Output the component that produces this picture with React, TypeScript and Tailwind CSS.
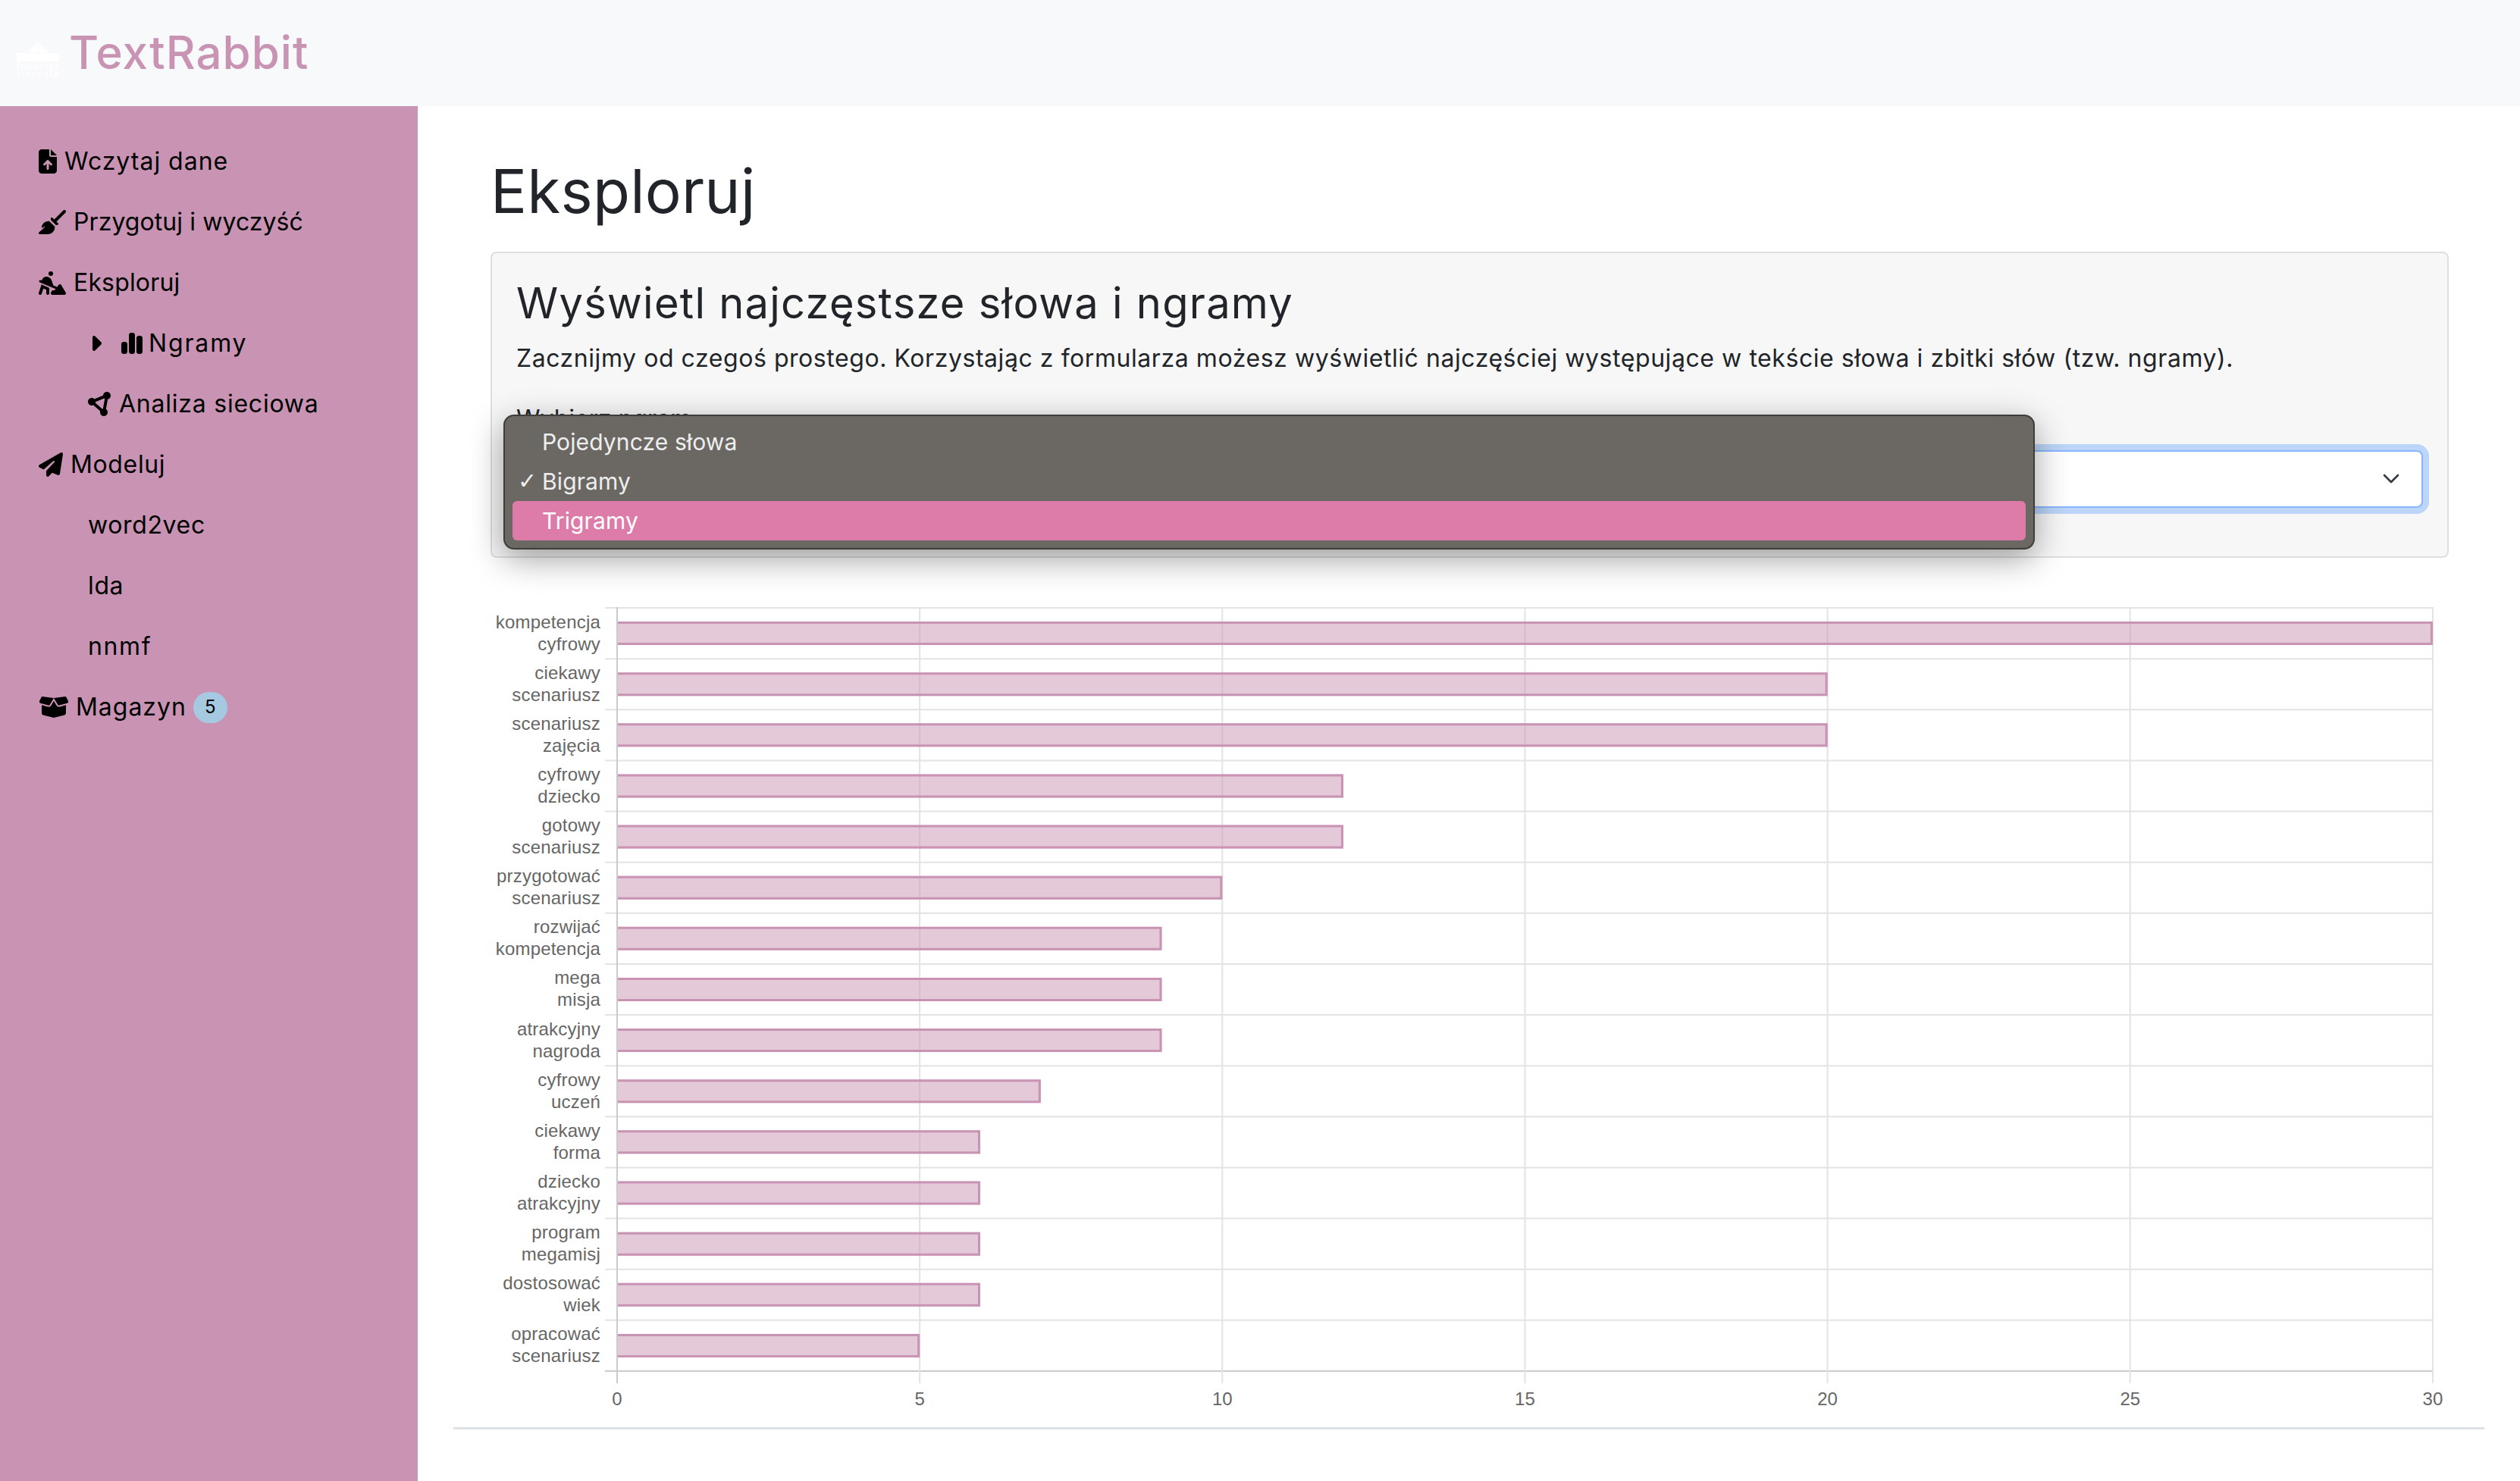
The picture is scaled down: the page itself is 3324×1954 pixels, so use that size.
import React from "react";
import {
  FaFileArrowUp,
  FaBroom,
  FaPersonDigging,
  FaCaretRight,
  FaChartSimple,
  FaCircleNodes,
  FaPaperPlane,
  FaBoxOpen,
} from "react-icons/fa6";

const data: [string, string, number][] = [
  ["kompetencja", "cyfrowy", 30],
  ["ciekawy", "scenariusz", 20],
  ["scenariusz", "zajęcia", 20],
  ["cyfrowy", "dziecko", 12],
  ["gotowy", "scenariusz", 12],
  ["przygotować", "scenariusz", 10],
  ["rozwijać", "kompetencja", 9],
  ["mega", "misja", 9],
  ["atrakcyjny", "nagroda", 9],
  ["cyfrowy", "uczeń", 7],
  ["ciekawy", "forma", 6],
  ["dziecko", "atrakcyjny", 6],
  ["program", "megamisj", 6],
  ["dostosować", "wiek", 6],
  ["opracować", "scenariusz", 5],
];

const X0 = 216;
const UNIT = 79.83;
const Y0 = 12;
const ROW = 67.13;
const GRID = "#e3e3e3";
const AXIS = "#cbcbcb";
const BAR = "#c994b4";
const LABEL_FONT = "'Liberation Sans', Arial, sans-serif";

function Chart() {
  const bottom = Y0 + ROW * 15;
  return (
    <svg width={2680} height={1090} viewBox="0 0 2680 1090" className="block">
      {data.map((_, i) => (
        <line key={i} x1={200} x2={X0 + UNIT * 30 + 1} y1={Y0 + ROW * i} y2={Y0 + ROW * i} stroke={GRID} strokeWidth={2} />
      ))}
      <line x1={200} x2={X0 + UNIT * 30 + 1} y1={bottom} y2={bottom} stroke={AXIS} strokeWidth={2} />
      {[1, 2, 3, 4, 5, 6].map((k) => (
        <line key={k} x1={X0 + UNIT * 5 * k} x2={X0 + UNIT * 5 * k} y1={Y0 - 1} y2={bottom + 16} stroke={GRID} strokeWidth={2} />
      ))}
      <line x1={X0} x2={X0} y1={Y0 - 1} y2={bottom + 16} stroke={AXIS} strokeWidth={2} />
      {data.map(([a, b, v], i) => {
        const cy = Y0 + ROW * i + ROW / 2;
        const top = cy - 15.5;
        const right = X0 + UNIT * v;
        return (
          <g key={i}>
            <rect x={X0 + 1} y={top} width={right - X0 - 1} height={31} fill="rgba(201,148,180,0.5)" />
            <path
              d={`M${X0 + 1} ${top + 1.5}H${right - 1.5}V${top + 29.5}H${X0 + 1}`}
              fill="none"
              stroke={BAR}
              strokeWidth={3}
            />
            <text x={194} y={Y0 + ROW * i + 26.5} textAnchor="end" fontFamily={LABEL_FONT} fontSize={24} letterSpacing={0.2} fill="#666666">
              {a}
            </text>
            <text x={194} y={Y0 + ROW * i + 55.5} textAnchor="end" fontFamily={LABEL_FONT} fontSize={24} letterSpacing={0.2} fill="#666666">
              {b}
            </text>
          </g>
        );
      })}
      {[0, 5, 10, 15, 20, 25, 30].map((t) => (
        <text key={t} x={X0 + UNIT * t} y={1064} textAnchor="middle" fontFamily={LABEL_FONT} fontSize={24} fill="#666666">
          {t}
        </text>
      ))}
    </svg>
  );
}

function Logo() {
  return (
    <svg width={56} height={48} viewBox="0 0 56 48" className="block">
      <polygon points="14,13 27.5,0 27.5,13" fill="#ffffff" />
      <polygon points="29,13 29,0 43,13" fill="#ffffff" />
      <rect x={0} y={14} width={56} height={11} fill="#ffffff" />
      <text x={0} y={35} fontFamily="'Liberation Serif', serif" fontSize={12} fontWeight={700} textLength={55} fill="#ffffff">
        fundacja
      </text>
      <text x={0} y={45} fontFamily="'Liberation Serif', serif" fontSize={12} fontWeight={700} textLength={55} fill="#ffffff">
        stocznia
      </text>
    </svg>
  );
}

function NavItem({ children, indent }: { children: React.ReactNode; indent?: boolean }) {
  return <div className={`flex h-[80px] items-center ${indent ? "pl-[116px]" : "pl-[51px]"}`}>{children}</div>;
}

export default function App() {
  return (
    <div className="flex h-[1954px] flex-col overflow-hidden bg-white text-[32px] leading-[48px] text-[#212529] [font-family:Inter,sans-serif]">
      <header className="flex h-[140px] shrink-0 items-center bg-[#f8f9fa] pl-[22px]">
        <div className="mt-[20px]">
          <Logo />
        </div>
        <span className="ml-[13px] mt-[-2px] text-[60px] font-medium leading-none tracking-[0.018em] text-[#c994b4]">TextRabbit</span>
      </header>
      <div className="flex min-h-0 flex-1">
        <aside className="w-[551px] shrink-0 bg-[#c994b4] pt-[33px] text-black">
          <NavItem>
            <FaFileArrowUp className="h-[32px] w-[24px]" />
            <span className="ml-[10px] tracking-[0.031em]">Wczytaj dane</span>
          </NavItem>
          <NavItem>
            <FaBroom className="h-[32px] w-[36px]" />
            <span className="ml-[10px] tracking-[0.0025em]">Przygotuj i wyczyść</span>
          </NavItem>
          <NavItem>
            <FaPersonDigging className="h-[32px] w-[36px]" />
            <span className="ml-[10px] tracking-[0.005em]">Eksploruj</span>
          </NavItem>
          <NavItem indent>
            <FaCaretRight className="ml-[2px] h-[32px] w-[16px]" />
            <FaChartSimple className="ml-[26px] h-[32px] w-[28px]" />
            <span className="ml-[8px] tracking-[0.058em]">Ngramy</span>
          </NavItem>
          <NavItem indent>
            <FaCircleNodes className="h-[32px] w-[32px]" />
            <span className="ml-[9px] tracking-[0.024em]">Analiza sieciowa</span>
          </NavItem>
          <NavItem>
            <FaPaperPlane className="h-[32px] w-[32px]" />
            <span className="ml-[10px] tracking-[0.02em]">Modeluj</span>
          </NavItem>
          <NavItem indent>
            <span className="tracking-[0.02em]">word2vec</span>
          </NavItem>
          <NavItem indent>
            <span className="tracking-[0.02em]">lda</span>
          </NavItem>
          <NavItem indent>
            <span className="tracking-[0.05em]">nnmf</span>
          </NavItem>
          <NavItem>
            <FaBoxOpen className="h-[32px] w-[40px]" />
            <span className="ml-[9px] tracking-[0.03em]">Magazyn</span>
            <span className="ml-[9px] flex h-[41px] w-[45px] items-center justify-center rounded-full bg-[#a6c9e2] text-[24px] leading-none">5</span>
          </NavItem>
        </aside>
        <main className="min-w-0 flex-1 px-[47px] pt-[64px]">
          <div className="pl-[49px] pr-[47px]">
            <h1 className="text-[80px] font-normal leading-[96px] tracking-[0.003em] text-[#212529]">Eksploruj</h1>
            <section className="mt-[32px] rounded-[8px] border-2 border-[#dfdfdf] bg-[#f7f7f7] px-[32px] pb-[64px] pt-[33px]">
              <h3 className="text-[56px] font-normal leading-[67px] tracking-[0.0225em]">Wyświetl najczęstsze słowa i ngramy</h3>
              <p className="mt-[15px] tracking-[0.0175em]">Zacznijmy od czegoś prostego. Korzystając z formularza możesz wyświetlić najczęściej występujące w tekście słowa i zbitki słów (tzw. ngramy).</p>
              <div className="relative mt-[32px]">
                <label className="block">Wybierz ngram:</label>
                <div className="mt-[17px] flex h-[76px] items-center justify-end rounded-[8px] border-2 border-[#86b7fe] bg-white pr-[24px] shadow-[0_0_0_8px_rgba(13,110,253,0.25)]">
                  <svg width={32} height={32} viewBox="0 0 16 16" fill="none" stroke="#343a40" strokeLinecap="round" strokeLinejoin="round">
                    <path d="m3.5 5.5 4.5 4.5 4.5-4.5" strokeWidth={1.3} />
                  </svg>
                </div>
                <div className="absolute left-[-17px] top-[18px] h-[178px] w-[2020px] rounded-[14px] border-2 border-[#3f3d3b] bg-[#6b6864] px-[10px] pt-[8px] text-[30px] leading-[52px] tracking-[0.004em] text-[#eeeeee] shadow-[0_12px_44px_rgba(0,0,0,0.38)]">
                  <div className="h-[52px] pl-[39px]">Pojedyncze słowa</div>
                  <div className="relative h-[52px] pl-[39px]">
                    <span className="absolute left-[7px] top-0 text-[30px] [font-family:'DejaVu_Sans',sans-serif]">✓</span>
                    Bigramy
                  </div>
                  <div className="h-[52px] rounded-[6px] bg-[#dd7ba9] pl-[39px] text-white">Trigramy</div>
                </div>
              </div>
            </section>
          </div>
          <div className="mt-[54px]">
            <Chart />
          </div>
          <div className="mt-[3px] border-t-[3px] border-[#dee2e6]" />
        </main>
      </div>
    </div>
  );
}
